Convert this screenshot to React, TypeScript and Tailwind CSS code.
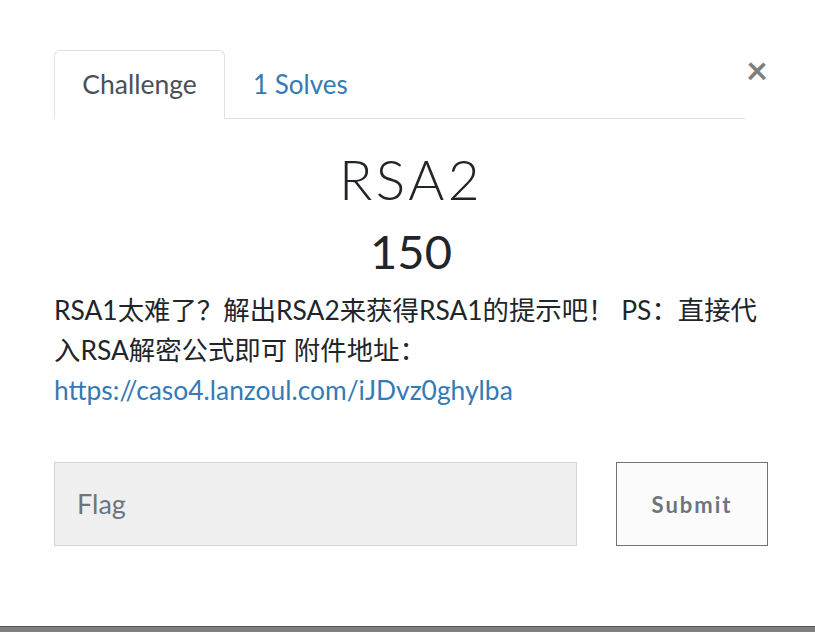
export default function App() {
  return (
    <div className="w-[815px] h-[632px] bg-white flex flex-col font-['Lato','Noto_Sans_CJK_SC',sans-serif] overflow-hidden">
      <div className="flex-1 px-[54px] pt-[50px] pr-[47px]">
        <div className="flex items-start">
          <nav className="flex flex-1 border-b border-[#dee2e6] h-[69px]">
            <div className="w-[171px] h-[69px] border border-[#dee2e6] border-b-white rounded-t-[6px] bg-white flex items-center justify-center text-[26.5px] text-[#495057]">
              Challenge
            </div>
            <div className="px-[28px] h-[68px] flex items-center text-[26px] text-[#337ab7]">
              1 Solves
            </div>
          </nav>
          <button className="w-[23px] ml-0 -mt-[1px] text-[38px] leading-[40px] font-bold text-[#7f7f7f] text-right">
            ×
          </button>
        </div>
        <h2 className="text-center text-[55px] leading-[64px] font-light text-[#212529] mt-[28px] tracking-[3.5px]">
          RSA2
        </h2>
        <h3 className="text-center text-[47px] leading-[56px] text-[#212529] mt-[12px]">150</h3>
        <p className="mt-[11px] text-[26.4px] leading-[40px] text-[#212529]">
          RSA1太难了？解出RSA2来获得RSA1的提示吧！ PS：直接代入RSA解密公式即可 附件地址：
          <br />
          <a className="text-[#337ab7]">https://caso4.lanzoul.com/iJDvz0ghylba</a>
        </p>
        <div className="flex mt-[52px] gap-[39px]">
          <div className="w-[523px] h-[84px] bg-[#efefef] border border-[#ced4da] flex items-center px-[22px] text-[27px] text-[#6c757d]">
            Flag
          </div>
          <button className="w-[152px] h-[84px] border border-[#6c757d] bg-[#fbfbfb] text-[22px] font-bold tracking-[2px] text-[#6c757d]">
            Submit
          </button>
        </div>
      </div>
      <div className="h-[6px] bg-[#7f7f7f] border-t border-[#5a5a5a]" />
    </div>
  );
}
